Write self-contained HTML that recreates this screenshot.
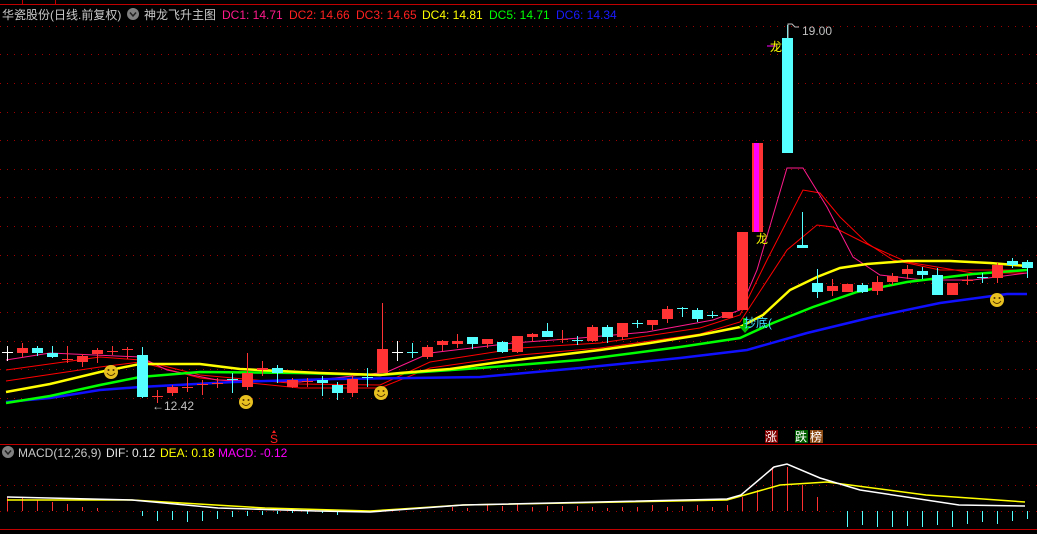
<!DOCTYPE html>
<html><head><meta charset="utf-8"><style>
html,body{margin:0;padding:0;background:#000;overflow:hidden}
svg{display:block}
text{font-family:"Liberation Sans","Noto Sans CJK SC",sans-serif;font-size:12px}
</style></head><body>
<svg id="s" width="1037" height="534" xmlns="http://www.w3.org/2000/svg">
<rect width="1037" height="534" fill="#000"/>
<g id="grid"></g>
<line x1="0" y1="4.5" x2="1037" y2="4.5" stroke="#c00000"/>
<line x1="22.5" y1="0" x2="22.5" y2="4" stroke="#c00000"/>
<line x1="55.5" y1="0" x2="55.5" y2="4" stroke="#c00000"/>
<line x1="0" y1="444.5" x2="1037" y2="444.5" stroke="#c00000"/>
<line x1="0" y1="529.5" x2="1037" y2="529.5" stroke="#c00000"/>
<g id="lines"></g>
<g id="candles"></g>
<g id="macd"></g>
<!-- header -->
<text x="2" y="19" fill="#c8c8c8">华瓷股份(日线.前复权)</text>
<circle cx="133" cy="14" r="6" fill="#808080"/>
<path d="M130 12.5 L133 16 L136 12.5" stroke="#222" stroke-width="1.5" fill="none"/>
<text x="144" y="19" fill="#c8c8c8">神龙飞升主图</text>
<text x="222" y="19" fill="#ff1a8c">DC1: 14.71</text>
<text x="289" y="19" fill="#ff2020">DC2: 14.66</text>
<text x="356" y="19" fill="#ff2020">DC3: 14.65</text>
<text x="422" y="19" fill="#ffff00">DC4: 14.81</text>
<text x="489" y="19" fill="#00ff00">DC5: 14.71</text>
<text x="556" y="19" fill="#1a1aff">DC6: 14.34</text>
<!-- labels -->
<text x="152" y="410" fill="#c0c0c0">←12.42</text>
<path d="M788 38 V24 h4 l3 3 h4" stroke="#c0c0c0" fill="none"/>
<text x="802" y="35" fill="#c0c0c0">19.00</text>
<line x1="767" y1="46" x2="776" y2="46" stroke="#ff00ff"/>
<text x="770" y="51" fill="#ffff00">龙</text>
<text x="756" y="243" fill="#ffff00">龙</text>
<path d="M743 318 v8 h-4 l6 7 l6 -7 h-4 v-8z" fill="#00c000"/>
<text x="744" y="327" fill="#40e0ff" font-size="11">抄底(</text>
<text x="270" y="443" fill="#ff2020" font-size="11">S</text>
<path d="M272 433 l2 -3 l2 3z" fill="#ff2020"/>
<rect x="765" y="430" width="13" height="13" fill="#800000"/><text x="765" y="441" fill="#fff">涨</text>
<rect x="795" y="430" width="13" height="13" fill="#006000"/><text x="795" y="441" fill="#fff">跌</text>
<rect x="810" y="430" width="13" height="13" fill="#8b4a13"/><text x="810" y="441" fill="#fff">榜</text>
<!-- smileys -->
<g id="sm"></g>
<!-- macd header -->
<circle cx="8" cy="452" r="6" fill="#808080"/>
<path d="M5 450.5 L8 454 L11 450.5" stroke="#222" stroke-width="1.5" fill="none"/>
<text x="18" y="457" fill="#c8c8c8">MACD(12,26,9)</text>
<text x="106" y="457" fill="#e8e8e8">DIF: 0.12</text>
<text x="160" y="457" fill="#ffff00">DEA: 0.18</text>
<text x="218" y="457" fill="#ff00ff">MACD: -0.12</text>
<text x="18" y="543" fill="#c8c8c8">MACD(12,26,9) DIF: 0.12 DEA: 0.18 MACD: -0.12</text>
</svg>
<script>
var NS="http://www.w3.org/2000/svg";
function el(p,t,a){var e=document.createElementNS(NS,t);for(var k in a)e.setAttribute(k,a[k]);document.getElementById(p).appendChild(e);return e;}
// grid
[26,54,83,112,140,169,197,226,255,283,312,341,369,398,427,485,511].forEach(function(y){
 el("grid","line",{x1:0,x2:1037,y1:y+.5,y2:y+.5,stroke:"#a00000","stroke-dasharray":"1 6"});
});
// lines
function pl(pts,c,w){el("lines","polyline",{points:pts.map(function(p){return p.join(",")}).join(" "),fill:"none",stroke:c,"stroke-width":w});}
pl([[6,381],[100,367],[140,362],[200,378],[300,388],[380,388],[430,368],[520,355],[600,348],[700,334],[740,322],[787,250],[817,225],[833,227],[873,247],[907,262],[973,273],[1027,273]],"#ff0000",1);
pl([[6,370],[100,357],[140,360],[200,375],[300,384],[380,385],[430,362],[520,348],[600,343],[700,328],[740,315],[767,260],[803,190],[820,193],[840,217],[867,243],[893,260],[940,270],[1027,270]],"#ff0000",1);
pl([[6,360],[50,353],[140,357],[167,370],[217,380],[300,382],[387,372],[430,353],[513,343],[580,338],[647,332],[713,320],[740,310],[757,270],[787,168],[803,168],[827,207],[853,257],[880,275],[923,280],[973,280],[1027,273]],"#ff1a8c",1);
pl([[6,402],[50,398],[100,390],[140,387],[233,382],[333,379],[413,378],[480,377],[580,368],[680,358],[747,350],[807,333],[873,317],[940,303],[1007,294],[1027,294]],"#1010ff",2.5);
pl([[6,403],[50,396],[100,385],[140,377],[200,372],[300,373],[380,375],[480,368],[580,360],[680,347],[740,338],[773,323],[813,307],[857,292],[907,282],[973,274],[1027,270]],"#00ff00",2.5);
pl([[6,392],[50,384],[100,372],[140,364],[200,364],[240,369],[320,373],[380,375],[400,373],[450,369],[500,362],[550,356],[600,350],[650,343],[700,335],[740,327],[763,315],[790,290],[817,277],[840,268],[867,264],[907,261],[950,261],[990,263],[1027,266]],"#ffff00",2.5);
// candles [x, top, bot, wtop, wbot, color]
var R="#ff3333",C="#55ffff",W="#ffffff";
var d=[[7,352,353,346,361,W],[22,348,353,343,357,R],[37,348,353,346,356,C],[52,353,357,346,358,C],[67,359,360,346,363,R],[82,356,362,354,367,R],[97,350,354,348,363,R],[112,351,352,346,355,R],[127,349,350,347,359,R],[142,355,397,347,398,C],[157,396,397,390,403,R],[172,387,393,385,396,R],[187,387,388,377,392,R],[202,384,385,380,395,R],[217,383,384,378,388,R],[232,379,380,373,393,C],[247,373,387,353,390,R],[262,368,370,361,376,R],[277,368,373,365,383,C],[292,380,387,378,388,R],[307,381,382,378,387,R],[322,380,383,376,396,C],[337,385,393,382,400,C],[352,379,393,375,397,R],[367,377,378,368,387,C],[382,349,373,303,373,R],[397,352,353,341,361,W],[412,352,353,343,358,C],[427,347,357,345,359,R],[442,341,345,340,351,R],[457,341,344,334,348,R],[472,337,344,337,349,C],[487,339,344,339,348,R],[502,342,352,341,353,C],[517,336,352,336,353,R],[532,334,337,333,342,R],[547,331,337,323,337,C],[562,339,340,330,343,R],[577,340,341,336,345,C],[592,327,341,325,342,R],[607,327,337,325,343,C],[622,323,337,323,340,R],[637,323,324,320,328,C],[652,320,325,320,330,R],[667,309,319,306,323,R],[682,308,309,307,317,C],[697,310,319,308,322,C],[712,315,316,311,318,C],[727,312,318,312,318,R],[742,232,310,232,310,R],[757,143,232,143,232,R],[787,38,153,25,153,C],[802,245,248,212,248,C],[817,283,292,269,298,C],[832,286,291,279,296,R],[847,284,292,284,292,R],[862,285,292,283,293,C],[877,282,291,276,295,R],[892,276,282,273,285,R],[907,269,274,265,279,R],[922,271,275,267,279,C],[937,275,295,268,295,C],[952,283,295,283,295,R],[967,280,281,275,285,R],[982,277,278,273,283,C],[997,265,278,263,283,R],[1012,261,265,258,268,C],[1027,262,268,260,278,C]];
d.forEach(function(c){
 el("candles","line",{x1:c[0]+.5,x2:c[0]+.5,y1:c[3],y2:c[4],stroke:c[5]});
 el("candles","rect",{x:c[0]-5,y:c[1],width:11,height:Math.max(1,c[2]-c[1]),fill:c[5]});
});
el("candles","rect",{x:754,y:143,width:5,height:89,fill:"#ff00ff"});
// smileys
[[111,372],[246,402],[381,393],[997,300]].forEach(function(p){
 el("sm","circle",{cx:p[0],cy:p[1],r:7,fill:"#e8c020"});
 el("sm","circle",{cx:p[0]-2.5,cy:p[1]-2,r:1,fill:"#503000"});
 el("sm","circle",{cx:p[0]+2.5,cy:p[1]-2,r:1,fill:"#503000"});
 el("sm","path",{d:"M"+(p[0]-4)+" "+(p[1]+1)+" Q"+p[0]+" "+(p[1]+6)+" "+(p[0]+4)+" "+(p[1]+1),stroke:"#503000",fill:"none"});
});
// macd histogram
var hx=[[7,497],[22,498],[37,500],[52,502],[67,504],[82,507],[97,508],[452,507],[467,508],[487,505],[502,506],[517,504],[532,507],[547,506],[562,506],[577,506],[592,507],[607,508],[622,507],[637,507],[652,505],[667,507],[682,506],[697,505],[712,507],[727,505],[742,497],[757,490],[772,467],[787,467],[802,485],[817,497]];
hx.forEach(function(h){el("macd","line",{x1:h[0]+.5,x2:h[0]+.5,y1:h[1],y2:511,stroke:"#ff3030"});});
var cx=[[142,516],[157,521],[172,520],[187,522],[202,521],[217,519],[232,517],[247,516],[262,515],[277,514],[292,513],[307,514],[322,513],[337,515],[847,527],[862,525],[877,527],[892,527],[907,526],[922,527],[937,525],[952,527],[967,524],[982,522],[997,524],[1012,521],[1027,519]];
cx.forEach(function(h){el("macd","line",{x1:h[0]+.5,x2:h[0]+.5,y1:511,y2:h[1],stroke:"#55ffff"});});
function ml(pts,c,w){el("macd","polyline",{points:pts.map(function(p){return p.join(",")}).join(" "),fill:"none",stroke:c,"stroke-width":w});}
ml([[7,500],[132,500],[265,508],[370,511],[463,505],[727,500],[780,485],[827,482],[926,495],[1025,502]],"#ffff00",1.5);
ml([[7,497],[132,500],[218,508],[317,511],[370,512],[463,505],[727,499],[741,495],[774,467],[787,464],[820,478],[860,490],[959,505],[1025,506]],"#ffffff",1.5);
</script>
</body></html>
